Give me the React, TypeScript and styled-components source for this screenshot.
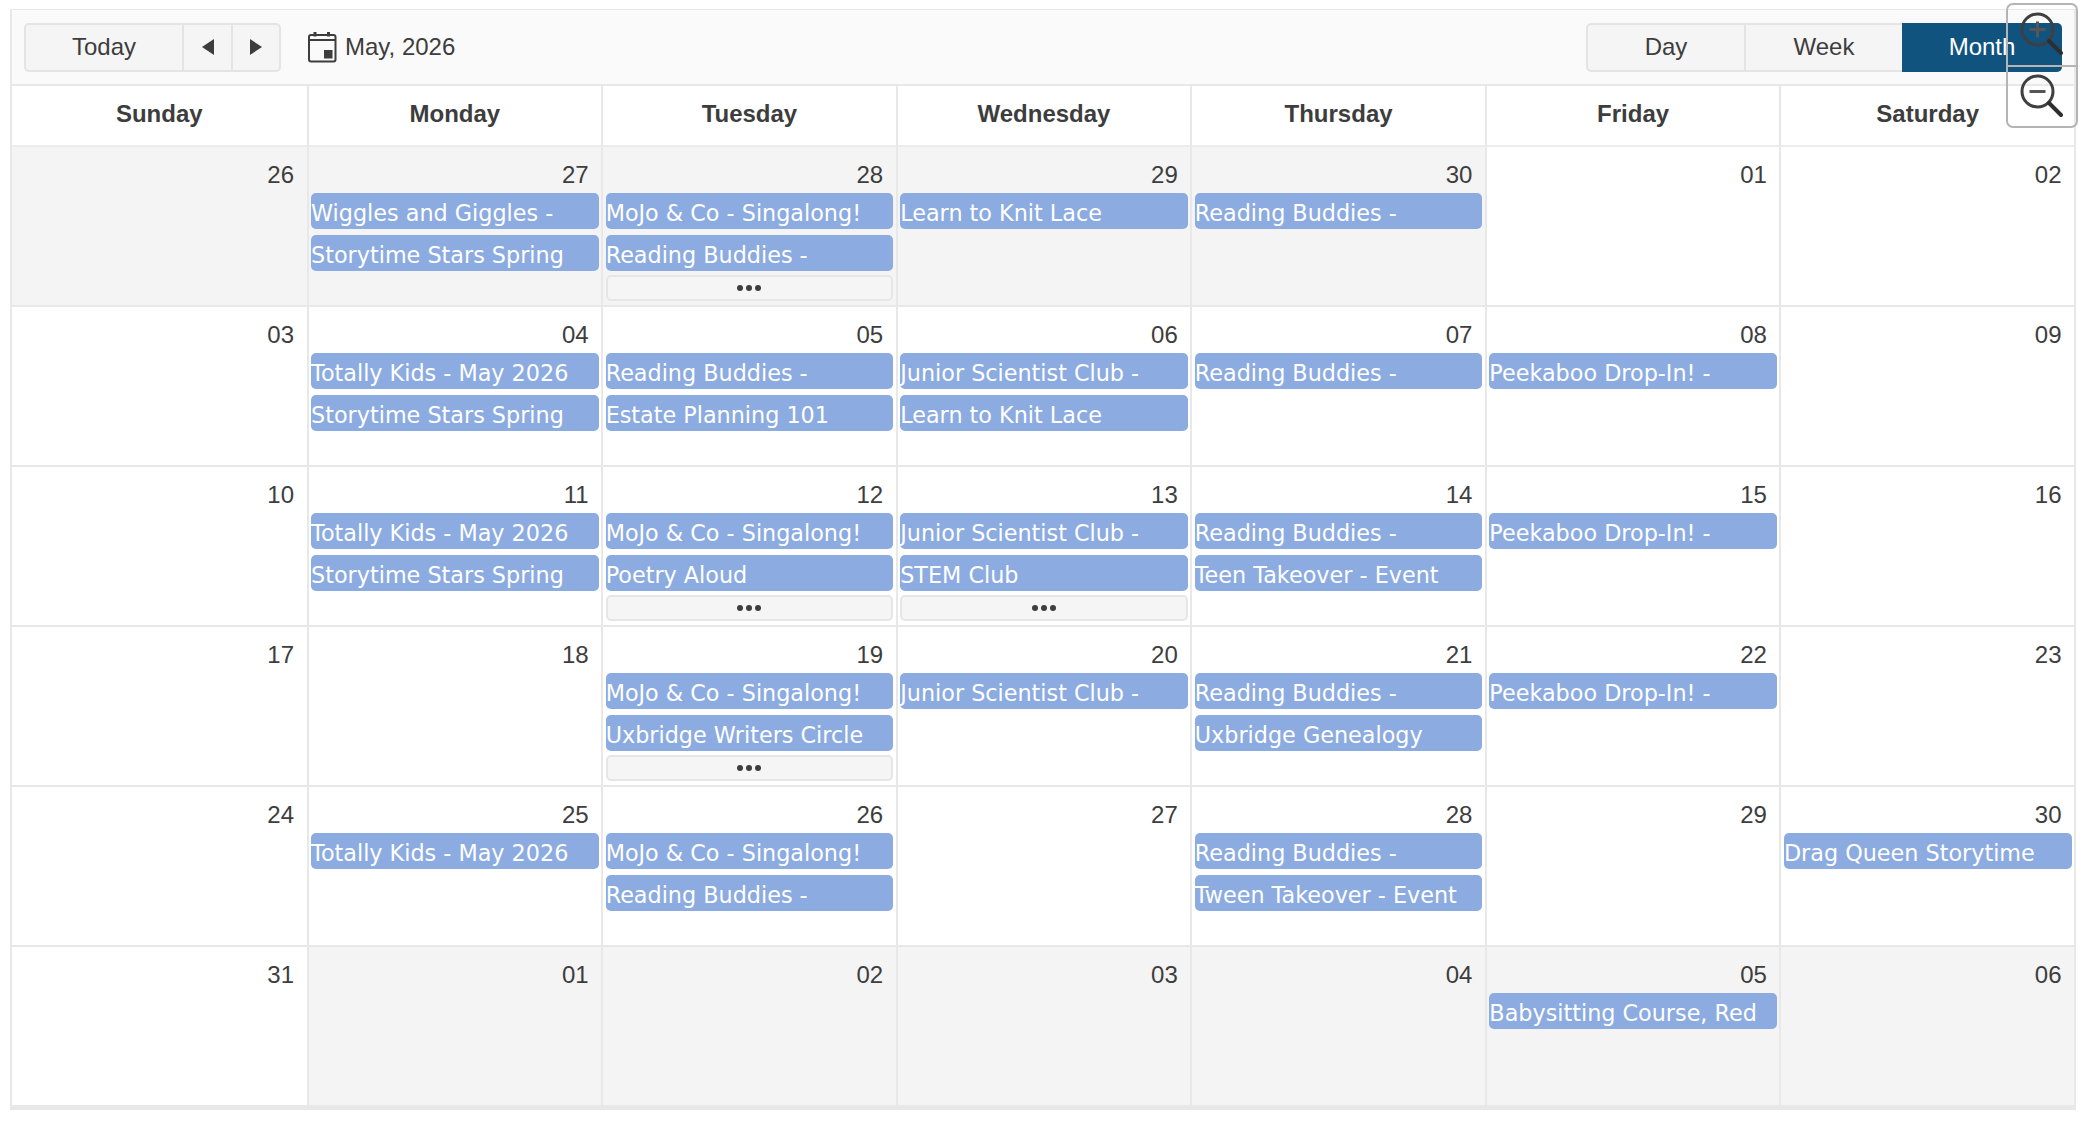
import React from 'react';
import styled, { createGlobalStyle } from 'styled-components';

const GlobalStyle = createGlobalStyle`
  html, body {
    margin: 0;
    padding: 0;
    background: #fff;
  }
  body {
    font-family: 'Liberation Sans', Arial, sans-serif;
    color: #3d3d3d;
  }
`;

const Page = styled.div`
  position: relative;
  width: 2098px;
  height: 1138px;
  padding: 9px 22px 0 10px;
  box-sizing: border-box;
  overflow: hidden;
`;

const Scheduler = styled.div`
  border: 2px solid #e8e8e8;
  border-top-width: 1px;
  border-bottom-width: 3px;
  background: #fff;
`;

const Toolbar = styled.div`
  display: flex;
  align-items: center;
  justify-content: space-between;
  height: 76px;
  padding: 0 12px;
  background: #fafafa;
  border-bottom: 2px solid #e8e8e8;
  box-sizing: border-box;
`;

const ToolGroup = styled.div`
  display: flex;
  align-items: center;
`;

const ButtonGroup = styled.div`
  display: flex;
  height: 49px;
  border: 2px solid #e4e4e4;
  border-radius: 5px;
  box-sizing: border-box;
  background: #f5f5f5;
`;

const ToolButton = styled.button<{ $width: number; $active?: boolean }>`
  display: flex;
  align-items: center;
  justify-content: center;
  width: ${(p) => p.$width}px;
  padding: 0;
  margin: ${(p) => (p.$active ? '-2px -2px -2px 0' : '0')};
  border: 0;
  border-left: ${(p) => (p.$active ? '0' : '2px solid #e4e4e4')};
  border-radius: ${(p) => (p.$active ? '0 5px 5px 0' : '0')};
  background: ${(p) => (p.$active ? '#11537f' : 'transparent')};
  color: ${(p) => (p.$active ? '#fff' : '#3d3d3d')};
  font: 24px 'Liberation Sans', Arial, sans-serif;
  &:first-child {
    border-left: 0;
  }
`;

const DateLabel = styled.div`
  display: flex;
  align-items: center;
  gap: 8px;
  margin-left: 27px;
  font-size: 24px;
`;

const Grid = styled.div`
  display: grid;
  grid-template-columns: repeat(7, 1fr);
`;

const DayHeader = styled.div`
  display: flex;
  align-items: center;
  justify-content: center;
  height: 61px;
  padding-bottom: 3px;
  border-left: 2px solid #e8e8e8;
  border-bottom: 2px solid #ececec;
  box-sizing: border-box;
  font-size: 24px;
  font-weight: 700;
  &:first-child {
    border-left: 0;
  }
`;

const Cell = styled.div<{ $muted?: boolean }>`
  display: flex;
  flex-direction: column;
  height: 160px;
  padding: 0 2.5px;
  border-left: 2px solid #e8e8e8;
  border-bottom: 2px solid #e8e8e8;
  box-sizing: border-box;
  background: ${(p) => (p.$muted ? '#f4f4f4' : '#fff')};
  overflow: hidden;
  &:nth-child(7n + 1) {
    border-left: 0;
  }
`;

const DateNumber = styled.div`
  height: 24px;
  padding: 14px 10px 8px 0;
  line-height: 27px;
  text-align: right;
  font-size: 24px;
`;

const EventBar = styled.div`
  flex: none;
  height: 36px;
  margin-bottom: 6px;
  border-radius: 5px;
  background: #8cabe0;
  color: #fff;
  font: 22.3px/41px 'DejaVu Sans', Verdana, sans-serif;
  white-space: nowrap;
  overflow: hidden;
`;

const MoreButton = styled.button`
  flex: none;
  display: flex;
  align-items: center;
  justify-content: center;
  gap: 3px;
  height: 26px;
  margin-top: -2px;
  padding: 0;
  border: 2px solid #e6e6e6;
  border-radius: 5px;
  background: #f5f5f5;
`;

const MoreDot = styled.span`
  width: 6px;
  height: 6px;
  border-radius: 50%;
  background: #3d3d3d;
`;

const ZoomControl = styled.div`
  position: absolute;
  top: 3px;
  left: 2006px;
  display: flex;
  flex-direction: column;
  width: 72px;
  border: 2px solid #b4b4b4;
  border-radius: 7px;
  box-sizing: border-box;
`;

const ZoomButton = styled.button`
  display: flex;
  align-items: center;
  justify-content: center;
  height: 60px;
  padding: 0 0 2px;
  border: 0;
  background: transparent;
  & + & {
    height: 61px;
    border-top: 2px solid #b4b4b4;
  }
  svg {
    filter: blur(0.4px);
  }
`;

function Triangle({ dir }: { dir: 'left' | 'right' }) {
  return (
    <svg width="14" height="18" viewBox="0 0 14 18">
      <path d={dir === 'left' ? 'M13 1v16L1 9z' : 'M1 1v16l12-8z'} fill="#3d3d3d" />
    </svg>
  );
}

function CalendarIcon() {
  return (
    <svg width="29" height="31" viewBox="0 0 29 31" fill="none">
      <rect x="1" y="3" width="26.5" height="26.5" rx="2" stroke="#3d3d3d" strokeWidth="2" />
      <path d="M1 8h26.5" stroke="#3d3d3d" strokeWidth="2" />
      <path d="M7 0v4.5M20.5 0v4.5" stroke="#3d3d3d" strokeWidth="3" />
      <rect x="16" y="18" width="8.5" height="8.5" fill="#3d3d3d" />
    </svg>
  );
}

function MagnifierIcon({ plus }: { plus?: boolean }) {
  return (
    <svg width="46" height="46" viewBox="0 0 46 46" fill="none">
      <circle cx="18.5" cy="18.5" r="15.5" stroke="#3f3f3f" strokeWidth="3" />
      <path d="M10.5 18.5h16" stroke="#555" strokeWidth="3" />
      {plus && <path d="M18.5 10.5v16" stroke="#555" strokeWidth="3" />}
      <path d="M30 30l12 12" stroke="#2e2e2e" strokeWidth="4" strokeLinecap="round" />
    </svg>
  );
}

type Day = { date: string; muted?: boolean; events?: string[]; more?: boolean };

const dayNames = ['Sunday', 'Monday', 'Tuesday', 'Wednesday', 'Thursday', 'Friday', 'Saturday'];

const days: Day[] = [
  { date: '26', muted: true },
  { date: '27', muted: true, events: ['Wiggles and Giggles -', 'Storytime Stars Spring'] },
  { date: '28', muted: true, events: ['MoJo & Co - Singalong!', 'Reading Buddies -'], more: true },
  { date: '29', muted: true, events: ['Learn to Knit Lace'] },
  { date: '30', muted: true, events: ['Reading Buddies -'] },
  { date: '01' },
  { date: '02' },
  { date: '03' },
  { date: '04', events: ['Totally Kids - May 2026', 'Storytime Stars Spring'] },
  { date: '05', events: ['Reading Buddies -', 'Estate Planning 101'] },
  { date: '06', events: ['Junior Scientist Club -', 'Learn to Knit Lace'] },
  { date: '07', events: ['Reading Buddies -'] },
  { date: '08', events: ['Peekaboo Drop-In! -'] },
  { date: '09' },
  { date: '10' },
  { date: '11', events: ['Totally Kids - May 2026', 'Storytime Stars Spring'] },
  { date: '12', events: ['MoJo & Co - Singalong!', 'Poetry Aloud'], more: true },
  { date: '13', events: ['Junior Scientist Club -', 'STEM Club'], more: true },
  { date: '14', events: ['Reading Buddies -', 'Teen Takeover - Event'] },
  { date: '15', events: ['Peekaboo Drop-In! -'] },
  { date: '16' },
  { date: '17' },
  { date: '18' },
  { date: '19', events: ['MoJo & Co - Singalong!', 'Uxbridge Writers Circle'], more: true },
  { date: '20', events: ['Junior Scientist Club -'] },
  { date: '21', events: ['Reading Buddies -', 'Uxbridge Genealogy'] },
  { date: '22', events: ['Peekaboo Drop-In! -'] },
  { date: '23' },
  { date: '24' },
  { date: '25', events: ['Totally Kids - May 2026'] },
  { date: '26', events: ['MoJo & Co - Singalong!', 'Reading Buddies -'] },
  { date: '27' },
  { date: '28', events: ['Reading Buddies -', 'Tween Takeover - Event'] },
  { date: '29' },
  { date: '30', events: ['Drag Queen Storytime'] },
  { date: '31' },
  { date: '01', muted: true },
  { date: '02', muted: true },
  { date: '03', muted: true },
  { date: '04', muted: true },
  { date: '05', muted: true, events: ['Babysitting Course, Red'] },
  { date: '06', muted: true },
];

export default function App() {
  return (
    <Page>
      <GlobalStyle />
      <Scheduler>
        <Toolbar>
          <ToolGroup>
            <ButtonGroup>
              <ToolButton $width={156}>Today</ToolButton>
              <ToolButton $width={49}>
                <Triangle dir="left" />
              </ToolButton>
              <ToolButton $width={48}>
                <Triangle dir="right" />
              </ToolButton>
            </ButtonGroup>
            <DateLabel>
              <CalendarIcon />
              May, 2026
            </DateLabel>
          </ToolGroup>
          <ButtonGroup>
            <ToolButton $width={156}>Day</ToolButton>
            <ToolButton $width={158}>Week</ToolButton>
            <ToolButton $width={160} $active>
              Month
            </ToolButton>
          </ButtonGroup>
        </Toolbar>
        <Grid>
          {dayNames.map((name) => (
            <DayHeader key={name}>{name}</DayHeader>
          ))}
        </Grid>
        <Grid>
          {days.map((day, i) => (
            <Cell key={i} $muted={day.muted}>
              <DateNumber>{day.date}</DateNumber>
              {day.events?.map((title) => (
                <EventBar key={title}>{title}</EventBar>
              ))}
              {day.more && (
                <MoreButton>
                  <MoreDot />
                  <MoreDot />
                  <MoreDot />
                </MoreButton>
              )}
            </Cell>
          ))}
        </Grid>
      </Scheduler>
      <ZoomControl>
        <ZoomButton>
          <MagnifierIcon plus />
        </ZoomButton>
        <ZoomButton>
          <MagnifierIcon />
        </ZoomButton>
      </ZoomControl>
    </Page>
  );
}
